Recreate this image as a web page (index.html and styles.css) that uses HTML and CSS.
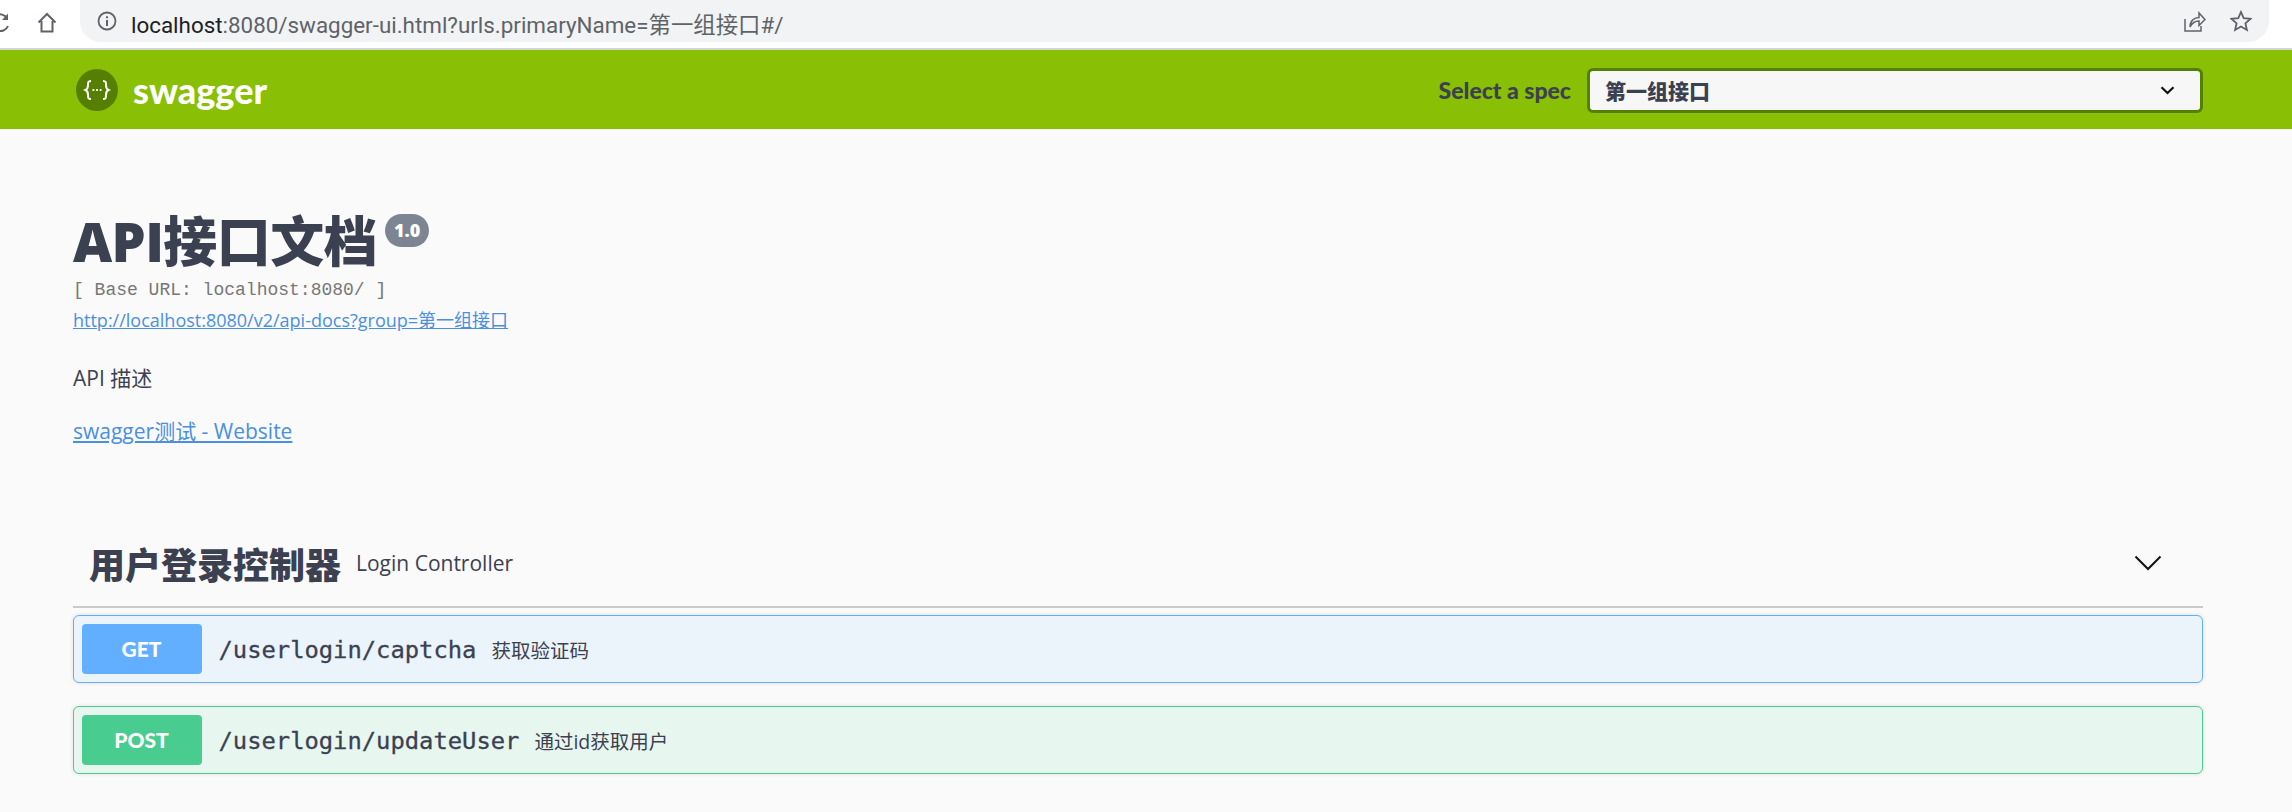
FILE: index.html
```html
<!DOCTYPE html>
<html lang="en">
<head>
    <meta charset="UTF-8">
    <title>Swagger UI</title>
    <link rel="stylesheet" href="styles.css">
</head>
<body>

<div class="browserbar">
    <svg class="navicon reload" width="12" height="22" viewBox="0 0 12 22"><path d="M-4 3.500A7.800 7.800 0 0 1 7 6.500M8 14A7.800 7.800 0 0 1 -3 18" fill="none" stroke="#5f6368" stroke-width="2"/><path d="M8 1.500V8H2Z" fill="#5f6368"/></svg>
    <svg class="navicon home" width="20" height="21" viewBox="0 0 20 21"><path d="M1.500 10.500L10 2l8.500 8.500M4.500 9v10.500h11V9" fill="none" stroke="#5f6368" stroke-width="2"/></svg>
    <div class="omnibox">
        <svg width="20" height="20" viewBox="0 0 20 20"><circle cx="10" cy="10" r="8.500" fill="none" stroke="#5f6368" stroke-width="1.800"/><path d="M10 9v6M10 5.200v2" stroke="#5f6368" stroke-width="2"/></svg>
        <span class="url"><b>localhost</b>:8080/swagger-ui.html?urls.primaryName=第一组接口#/</span>
        <svg class="share" width="22" height="22" viewBox="0 0 22 22"><path d="M1 9v12h16v-5" fill="none" stroke="#5f6368" stroke-width="1.500"/><path d="M6 17c0-6 4-9.500 9-9.500V3l6 6.500-6 6V11c-4 0-7 2-9 6z" fill="none" stroke="#5f6368" stroke-width="1.500"/></svg>
        <svg class="star" width="22" height="22" viewBox="0 0 22 22"><path d="M11 2l2.700 6.200 6.800.6-5.100 4.500 1.500 6.700L11 16.500 5.100 20l1.500-6.700L1.500 8.800l6.800-.6z" fill="none" stroke="#5f6368" stroke-width="1.800"/></svg>
    </div>
</div>

<div class="topbar">
    <div class="wrapper topbar-row">
        <svg class="logo" width="42" height="42" viewBox="0 0 42 42">
            <circle cx="21" cy="21" r="21" fill="#547f00"/>
            <path d="M15 12c-3 0-3 1.500-3 4s0 4-2.500 5c2.500 1 2.500 2.500 2.500 5s0 4 3 4M27 12c3 0 3 1.500 3 4s0 4 2.500 5c-2.500 1-2.500 2.500-2.500 5s0 4-3 4" fill="none" stroke="#fff" stroke-width="2"/>
            <path d="M16.500 21h1.800M20.100 21h1.800M23.700 21h1.800" stroke="#fff" stroke-width="2"/>
        </svg>
        <span class="brand">swagger</span>
        <span class="spec-label">Select a spec</span>
        <div class="spec-select">
            <span>第一组接口</span>
            <svg width="15" height="9" viewBox="0 0 15 9"><path d="M1.500 1.200L7.500 7l6-5.800" fill="none" stroke="#111" stroke-width="2.200"/></svg>
        </div>
    </div>
</div>

<div class="wrapper">
    <div class="info">
        <h2 class="title">API接口文档<span class="version">1.0</span></h2>
        <div class="base-url">[ Base URL: localhost:8080/ ]</div>
        <a class="spec-url" href="#">http://localhost:8080/v2/api-docs?group=第一组接口</a>
        <p class="descr">API 描述</p>
        <a class="website" href="#">swagger测试 - Website</a>
    </div>

    <div class="tag">
        <span class="tag-name">用户登录控制器</span>
        <span class="tag-descr">Login Controller</span>
        <svg width="28" height="16" viewBox="0 0 28 16"><path d="M1.500 1.500L14 14 26.500 1.500" fill="none" stroke="#111" stroke-width="2"/></svg>
    </div>

    <div class="opblock get">
        <span class="method">GET</span>
        <span class="path">/userlogin/captcha</span>
        <span class="summary">获取验证码</span>
    </div>
    <div class="opblock post">
        <span class="method">POST</span>
        <span class="path">/userlogin/updateUser</span>
        <span class="summary">通过id获取用户</span>
    </div>
</div>

</body>
</html>
```

FILE: styles.css
```css
html, body
{
    margin: 0;
    height: 812px;
    overflow: hidden;
}
body
{
    background: #fafafa;
    color: #3b4151;
    font-family: "Open Sans", "Noto Sans CJK SC", sans-serif;
}

/* browser toolbar */
.browserbar
{
    display: flex;
    height: 48px;
    background: #fff;
    border-bottom: 2px solid #d3d5d6;
}
.navicon
{
    flex: none;
    margin-top: 12px;
}
.home
{
    margin-left: 25px;
    margin-right: 23px;
}
.omnibox
{
    display: flex;
    align-items: center;
    width: 2189px;
    height: 42px;
    padding-left: 17px;
    box-sizing: border-box;
    background: #f1f3f4;
    border-radius: 0 0 21px 21px;
}
.url
{
    flex: 1;
    margin-left: 14px;
    margin-top: 3px;
    font-family: "Roboto", "Noto Sans CJK SC", sans-serif;
    font-size: 22.400px;
    color: #5f6368;
}
.url b
{
    font-weight: 400;
    color: #202124;
}
.share
{
    margin-right: 24px;
}
.star
{
    margin-right: 17px;
}

/* swagger top bar */
.topbar
{
    height: 79px;
    background: #89bf04;
}
.wrapper
{
    width: 2130px;
    margin-left: 73px;
}
.topbar-row
{
    display: flex;
    align-items: center;
    height: 80px;
}
.logo
{
    flex: none;
    margin-left: 3px;
}
.brand
{
    margin-left: 15px;
    font-family: "Lato", sans-serif;
    font-size: 36px;
    font-weight: 900;
    color: #fff;
}
.spec-label
{
    margin-left: auto;
    margin-right: 16px;
    font-family: "Lato", sans-serif;
    font-size: 23px;
    font-weight: 900;
    color: #3b4151;
}
.spec-select
{
    display: flex;
    align-items: center;
    justify-content: space-between;
    width: 616px;
    height: 45px;
    padding: 0 25px 0 15px;
    box-sizing: border-box;
    background: #f7f7f7;
    border: 3px solid #547f00;
    border-radius: 6px;
    font-size: 21px;
    font-weight: 900;
}

/* info block */
.info
{
    padding-top: 76px;
}
.title
{
    display: flex;
    align-items: flex-start;
    margin: 0;
    height: 70px;
    font-size: 54px;
    line-height: 72px;
    font-weight: 800;
    letter-spacing: -0.600px;
}
.version
{
    margin: 9px 0 0 8px;
    padding: 0 9px;
    height: 33px;
    background: #7d8492;
    border-radius: 24px;
    font-size: 18px;
    line-height: 33px;
    letter-spacing: 0;
    color: #fff;
}
.base-url
{
    margin-top: 3px;
    font-family: "Liberation Mono", monospace;
    font-size: 18px;
    line-height: 24px;
    color: #777;
}
.spec-url
{
    display: block;
    margin-top: 6px;
    font-size: 18px;
    line-height: 24px;
    color: #4990e2;
}
.descr
{
    margin: 31px 0 0;
    font-size: 21px;
    line-height: 30px;
}
.website
{
    display: block;
    margin-top: 23px;
    font-size: 21px;
    line-height: 30px;
    color: #4990e2;
}

/* tag header */
.tag
{
    display: flex;
    align-items: center;
    height: 86px;
    margin-top: 71px;
    padding: 3px 41px 0 16px;
    border-bottom: 2px solid #c9cacc;
}
.tag-name
{
    font-size: 36px;
    font-weight: 900;
}
.tag-descr
{
    flex: 1;
    margin-left: 15px;
    font-size: 21px;
}

/* operations */
.opblock
{
    display: flex;
    align-items: center;
    height: 68px;
    box-sizing: border-box;
    margin-bottom: 23px;
    padding-left: 7.500px;
    border-radius: 6px;
    border: 1.500px solid;
    box-shadow: 0 0 4px rgba(0,0,0,.12);
}
.opblock.get
{
    margin-top: 7px;
    background: #ebf3fb;
    border-color: #61affe;
}
.opblock.post
{
    background: #e8f6f0;
    border-color: #49cc90;
}
.method
{
    width: 120px;
    height: 50px;
    border-radius: 4px;
    text-align: center;
    font-family: "Lato", sans-serif;
    font-size: 21px;
    line-height: 50px;
    font-weight: 900;
    color: #fff;
}
.get .method
{
    background: #61affe;
}
.post .method
{
    background: #49cc90;
}
.path
{
    margin-left: 17px;
    padding-top: 2px;
    font-family: "DejaVu Sans Mono", monospace;
    font-size: 23.800px;
    -webkit-text-stroke: 0.300px #3b4151;
}
.summary
{
    margin-left: 15px;
    padding-top: 1px;
    font-size: 19.500px;
}
```
